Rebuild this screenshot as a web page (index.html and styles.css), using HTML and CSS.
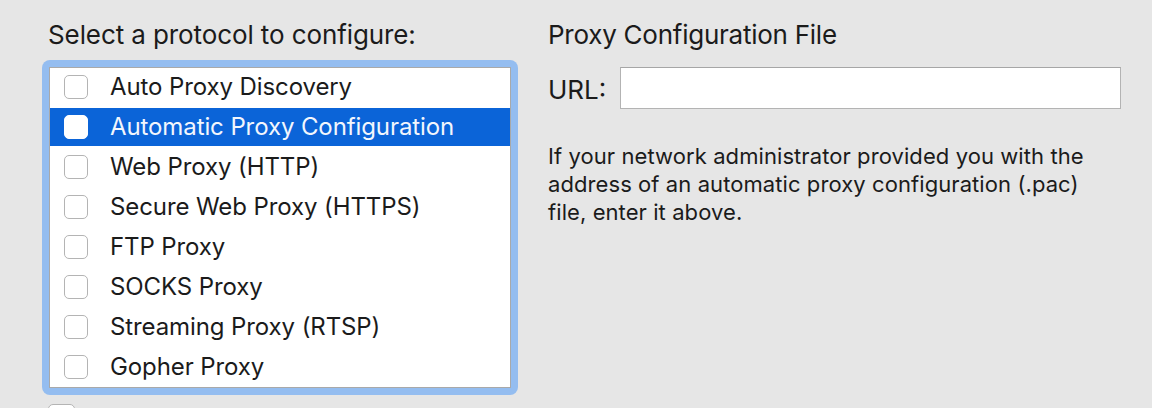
FILE: index.html
```html
<!DOCTYPE html>
<html lang="en">
<head>
  <meta charset="UTF-8">
  <title>Proxies</title>
  <link rel="stylesheet" href="styles.css">
</head>
<body>
  <div class="pane">
    <!-- Protocol list -->
    <div class="protocols">
      <h2>Select a protocol to configure:</h2>
      <div class="focus-ring">
        <ul class="protocol-list">
          <li><span class="check"></span>Auto Proxy Discovery</li>
          <li class="selected"><span class="check"></span>Automatic Proxy Configuration</li>
          <li><span class="check"></span>Web Proxy (HTTP)</li>
          <li><span class="check"></span>Secure Web Proxy (HTTPS)</li>
          <li><span class="check"></span>FTP Proxy</li>
          <li><span class="check"></span>SOCKS Proxy</li>
          <li><span class="check"></span>Streaming Proxy (RTSP)</li>
          <li><span class="check"></span>Gopher Proxy</li>
        </ul>
      </div>
      <div class="exclude"><span class="check"></span></div>
    </div>

    <!-- Details -->
    <div class="details">
      <h2 class="details-title">Proxy Configuration File</h2>
      <div class="url-row">
        <label for="pac-url">URL:</label>
        <input type="text" id="pac-url">
      </div>
      <p class="hint">If your network administrator provided you with the address of an automatic proxy configuration (.pac)<br>file, enter it above.</p>
    </div>
  </div>
</body>
</html>
```

FILE: styles.css
```css
body {
  margin: 0;
  height: 408px;
  background-color: #e6e6e6;
  font-family: Inter, "Noto Sans", sans-serif;
  color: #1b1b1b;
  overflow: hidden;
}

.pane {
  display: flex;
  gap: 30px;
  height: 100%;
  padding: 19px 0 0 42px;
  box-sizing: border-box;
  overflow: hidden;
}

h2 {
  margin: 0;
  font-size: 26px;
  font-weight: 400;
  line-height: 32px;
  letter-spacing: -0.1px;
}

.protocols {
  width: 476px;
}

.protocols h2 {
  margin: 0 0 9px 6px;
}

.focus-ring {
  padding: 7px;
  background-color: #94bdf0;
  border-radius: 8px;
}

.protocol-list {
  list-style: none;
  margin: 0;
  padding: 0;
  height: 319px;
  background-color: #fff;
  border: 1px solid #a9a9a9;
  display: flex;
  flex-direction: column;
  gap: 2px;
}

.protocol-list li {
  height: 38px;
  display: flex;
  align-items: center;
  gap: 22px;
  padding-left: 14px;
  font-size: 24px;
  line-height: 38px;
  letter-spacing: -0.1px;
}

.protocol-list li.selected {
  background-color: #0b64d8;
  color: #f2f6fd;
}

.check {
  width: 22px;
  height: 22px;
  flex: none;
  border: 1px solid #b4b4b4;
  border-radius: 5px;
  background-color: #fff;
}

.selected .check {
  border-color: #fff;
}

.exclude {
  margin: 9px 0 0 6px;
}

.exclude .check {
  display: block;
  width: 25px;
  height: 25px;
}

.details {
  width: 573px;
}

.details .details-title {
  letter-spacing: -0.25px;
}

.url-row {
  display: flex;
  align-items: center;
  gap: 14px;
  margin-top: 16px;
}

.url-row label {
  font-size: 26px;
  line-height: 32px;
  padding-top: 4px;
}

.url-row input {
  flex: 1;
  height: 42px;
  box-sizing: border-box;
  border: 1px solid #b3b3b3;
  border-top-color: #a6a6a6;
  background-color: #fff;
  margin: 0;
  padding: 0 6px;
  font: inherit;
  font-size: 22px;
  outline: none;
}

.hint {
  margin: 33px 0 0;
  font-size: 22px;
  line-height: 28px;
  letter-spacing: 0.08px;
}
```
